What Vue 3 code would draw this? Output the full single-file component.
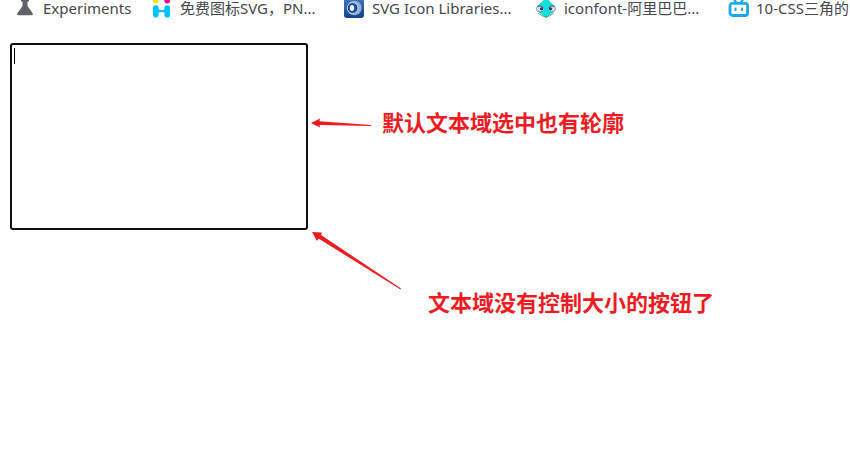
<script setup>
const bookmarks = [
  { icon: 'flask', title: 'Experiments' },
  { icon: 'people', title: '免费图标SVG，PN...' },
  { icon: 'rings', title: 'SVG Icon Libraries...' },
  { icon: 'drop', title: 'iconfont-阿里巴巴...' },
  { icon: 'tv', title: '10-CSS三角的' },
]
</script>

<template>
  <div class="page">
    <nav class="bookmarks" aria-label="Bookmarks">
      <a v-for="b in bookmarks" :key="b.icon" href="#" class="bookmark" :class="b.icon">
        <svg v-if="b.icon === 'flask'" class="icon" viewBox="0 0 20 20">
          <path d="M6 1h8v2.500h-1.500V8l5 7q1 2.200-1 2.200H3.500Q1.500 17.200 2.500 15l5-7V3.500H6z" fill="#5f6368" />
        </svg>
        <svg v-else-if="b.icon === 'people'" class="icon" viewBox="0 0 20 20">
          <circle cx="3.800" cy="2.500" r="2.900" fill="#ffe600" />
          <circle cx="15.200" cy="2.500" r="2.900" fill="#ff0090" />
          <path d="M3.800 10v6.800M15.200 10v6.800" stroke="#00c3ff" stroke-width="5.600" stroke-linecap="round" />
          <path d="M5 10.500q2 1.800 4.500 1.800t4.500-1.800v5q-2-1.500-4.500-1.500T5 15.500z" fill="#00c3ff" />
        </svg>
        <svg v-else-if="b.icon === 'rings'" class="icon" viewBox="0 0 20 20">
          <defs>
            <linearGradient id="ring-bg" x1="0" y1="0" x2="0" y2="1">
              <stop offset="0" stop-color="#3f78bb" />
              <stop offset="1" stop-color="#16418c" />
            </linearGradient>
          </defs>
          <rect width="20" height="20" rx="3" fill="url(#ring-bg)" />
          <circle cx="10.300" cy="10" r="7.300" fill="#8fb2d8" />
          <circle cx="8.600" cy="10" r="5.400" fill="#1d4b93" stroke="#d3e5f5" stroke-width=".8" />
          <ellipse cx="8" cy="10" rx="2.200" ry="2.900" fill="#eef6fd" />
        </svg>
        <svg v-else-if="b.icon === 'drop'" class="icon" viewBox="0 0 20 20">
          <path d="M10-2Q12 3 16 6Q20 10 17 14L10 19.500L3 14Q0 10 4 6Q8 3 10-2z" fill="#08e4e0" stroke="#2aabaf" stroke-width=".6" />
          <ellipse cx="4.300" cy="10.800" rx="3.900" ry="3" fill="#c5e6f0" stroke="#56838e" stroke-width=".6" />
          <ellipse cx="15.700" cy="10.800" rx="3.900" ry="3" fill="#c5e6f0" stroke="#56838e" stroke-width=".6" />
          <path d="M1 8.300q4-1.500 6.500 1.700M19 8.300q-4-1.500-6.500 1.700" fill="none" stroke="#2c5968" stroke-width=".9" />
          <circle cx="5.500" cy="10.800" r="1.600" fill="#1c3d70" />
          <circle cx="14.500" cy="10.800" r="1.600" fill="#1c3d70" />
          <path d="M2 15q4 3.200 8 4.300 4-1.100 8-4.300" fill="none" stroke="#3e8587" stroke-width=".8" />
        </svg>
        <svg v-else class="icon" viewBox="0 0 20 20">
          <path d="M6 1l2 3.500M15 1l-2 3.500" stroke="#1aabe2" stroke-width="2.500" />
          <rect x="2" y="5.300" width="17.600" height="12.200" rx="2.500" fill="#fff" stroke="#1aabe2" stroke-width="2.800" />
          <path d="M7.500 10.500v1.500M14 10.500v1.500" stroke="#1aabe2" stroke-width="2.200" stroke-linecap="round" />
        </svg>
        <span>{{ b.title }}</span>
      </a>
    </nav>

    <main class="demo">
      <div class="field">
        <textarea class="box" aria-label="文本域"></textarea>
        <span class="caret"></span>
      </div>
      <div class="notes">
        <p class="note">
          <svg class="arrow-short" viewBox="0 0 62 14">
            <path d="M0 9L9 4.500L8.500 7.300L60 11V12L8.500 11L9 13.500z" fill="#ed1c24" />
          </svg>
          <span>默认文本域选中也有轮廓</span>
        </p>
        <p class="note second">
          <svg class="arrow-long" viewBox="0 0 90 60">
            <path d="M0 1L10 1.500L9 4L89 57.500L88.500 58.500L6.500 7.500L5 10z" fill="#ed1c24" />
          </svg>
          <span>文本域没有控制大小的按钮了</span>
        </p>
      </div>
    </main>
  </div>
</template>

<style>
body {
  margin: 0;
  background: #fff;
}
</style>

<style scoped>
.page {
  font-family: "Noto Sans", "Noto Sans CJK SC", sans-serif;
}
.bookmarks {
  display: flex;
  height: 19px;
  padding-left: 15px;
  overflow-x: clip;
}
.bookmark {
  display: flex;
  flex: 0 0 192px;
  gap: 8px;
  align-items: center;
  height: 16px;
  color: #45484c;
  font-size: 15px;
  line-height: 16px;
  text-decoration: none;
  white-space: nowrap;
}
.bookmark.flask {
  flex-basis: 137px;
}
.icon {
  flex: none;
  width: 20px;
  height: 20px;
  overflow: visible;
}
.demo {
  display: flex;
  padding: 24px 10px 0;
}
.field {
  position: relative;
  flex: none;
}
.box {
  display: block;
  box-sizing: border-box;
  width: 298px;
  height: 187px;
  padding: 2px;
  border: 2px solid #101010;
  border-radius: 3px;
  outline: none;
  resize: none;
}
.caret {
  position: absolute;
  top: 5px;
  left: 4px;
  width: 1px;
  height: 16px;
  background: #000;
}
.notes {
  padding: 62px 0 0 3px;
}
.note {
  display: flex;
  gap: 9px;
  align-items: center;
  margin: 0;
  color: #ed1c24;
  font-family: "Noto Sans CJK SC", sans-serif;
  font-size: 22px;
  font-weight: 700;
  line-height: 32px;
  white-space: nowrap;
}
.note.second {
  gap: 26px;
  align-items: flex-start;
  margin-top: 94px;
  padding-left: 1px;
}
.note.second span {
  padding-top: 54px;
}
.arrow-short {
  flex: none;
  width: 62px;
  height: 14px;
}
.arrow-long {
  flex: none;
  width: 90px;
  height: 60px;
}
</style>
